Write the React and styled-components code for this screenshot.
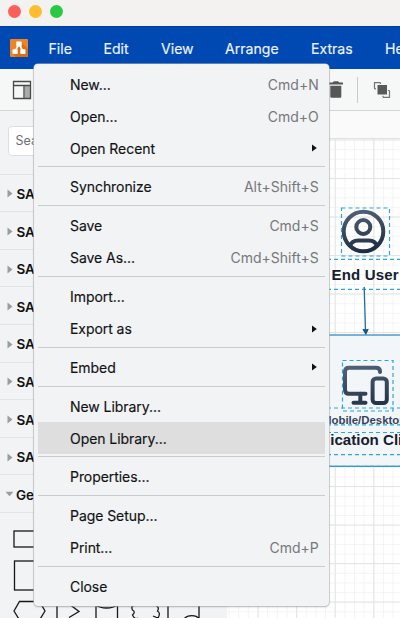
import React from "react";
import styled, { createGlobalStyle } from "styled-components";

const Global = createGlobalStyle`
  * { box-sizing: border-box; }
  body { margin: 0; background: #f3f2f1; font-family: Inter, "Liberation Sans", sans-serif; overflow: hidden; }
`;

const Window = styled.div`
  position: relative;
  width: 400px;
  height: 618px;
  overflow: hidden;
  display: flex;
  flex-direction: column;
  background: #f1f3f5;
`;
const TitleBar = styled.div`
  height: 26px;
  flex: none;
  display: flex;
  gap: 8.3px;
  padding: 4.5px 0 0 7.6px;
  background: #f3f2f0;
`;
const Light = styled.span`
  width: 13px;
  height: 13px;
  border-radius: 50%;
  background: ${(p) => p.$color};
`;
const MenuBar = styled.div`
  height: 43px;
  flex: none;
  display: flex;
  align-items: center;
  padding-left: 9.5px;
  background: #0049b2;
  border-top: 1px solid #003c98;
  color: #eef4ff;
`;
const Logo = styled.svg`
  flex: none;
  width: 18px;
  height: 18px;
  margin-right: 21px;
`;
const MenuTitle = styled.span`
  flex: none;
  width: ${(p) => p.$width}px;
  font-size: 14.1px;
  line-height: 20px;
  padding-top: 1px;
  -webkit-text-stroke: 0.15px currentColor;
  white-space: nowrap;
`;
const Toolbar = styled.div`
  height: 42px;
  flex: none;
  display: flex;
  align-items: center;
  background: #f6f7f7;
  border-bottom: 1px solid #d5d6d8;
  padding-left: 12px;
`;
const PanelIcon = styled.svg`
  flex: none;
  width: 20px;
  height: 20px;
  margin-right: 295px;
`;
const TrashIcon = styled.svg`
  flex: none;
  width: 18px;
  height: 20px;
`;
const Divider = styled.span`
  flex: none;
  width: 1px;
  height: 26px;
  margin: 0 15px 0 12px;
  background: #cacbcc;
`;
const LayersIcon = styled.svg`
  flex: none;
  width: 18px;
  height: 18px;
`;
const Body = styled.div`
  flex: 1;
  display: flex;
  min-height: 0;
`;
const Sidebar = styled.aside`
  flex: none;
  width: 227px;
  overflow: hidden;
  background: #f1f3f5;
`;
const SearchWrap = styled.div`
  height: 63.7px;
  padding: 15px 8px 0;
  border-bottom: 1px solid #e2e4e6;
`;
const Search = styled.div`
  height: 30px;
  padding-left: 6.5px;
  border: 1px solid #dcdee1;
  border-radius: 4px;
  background: #fff;
  color: #6e6f71;
  font-size: 12.5px;
  line-height: 28px;
`;
const Section = styled.div`
  height: 37.6px;
  display: flex;
  align-items: center;
  border-bottom: 1px solid #e2e4e6;
  padding-left: ${(p) => (p.$open ? 5 : 7)}px;
  gap: ${(p) => (p.$open ? 2 : 3.4)}px;
  padding-top: 2px;
  color: #111;
  font-size: 13.5px;
  font-weight: 600;
`;
const SectionArrow = styled.svg`
  flex: none;
  width: ${(p) => (p.$open ? 9 : 6)}px;
  height: 9px;
`;
const Shapes = styled.svg`
  display: block;
  width: 227px;
  height: 105px;
`;
const Main = styled.main`
  flex: 1;
  min-width: 0;
  display: flex;
  flex-direction: column;
`;
const Ruler = styled.div`
  height: 28px;
  flex: none;
  background: #fafafb;
  border-bottom: 1px solid #dfe0e1;
`;
const Diagram = styled.svg`
  display: block;
  width: 173px;
  height: 479px;
  background: #fff;
  font-family: "Liberation Sans", Arial, sans-serif;
  font-weight: 700;
`;
const Menu = styled.div`
  position: absolute;
  left: 34px;
  top: 64px;
  width: 295.2px;
  height: 542px;
  padding: 4.2px 4px;
  border-radius: 4px;
  background: #f1f3f5;
  box-shadow: 0 0 0 0.6px #b4b7bb, 0 1px 2px rgba(0, 0, 0, 0.25);
`;
const Item = styled.div`
  height: 32px;
  display: flex;
  align-items: center;
  justify-content: space-between;
  padding: 0 ${(p) => (p.$sub ? 8.500 : 6.5)}px 0 32px;
  background: ${(p) => (p.$active ? "#dedede" : "transparent")};
  color: #111214;
  font-size: 14px;
  white-space: nowrap;
`;
const Label = styled.span`
  letter-spacing: -0.06px;
  -webkit-text-stroke: 0.15px currentColor;
`;
const Shortcut = styled.span`
  color: #77787a;
`;
const SubArrow = styled.svg`
  width: 5px;
  height: 8px;
`;
const Separator = styled.div`
  height: 6.8px;
  padding-top: 2.2px;
  &::after {
    content: "";
    display: block;
    height: 1px;
    background: #cacbce;
  }
`;

const titles = [["File", 55], ["Edit", 57.5], ["View", 64], ["Arrange", 86], ["Extras", 74], ["Help", 50]];

const groups = [
  [["New...", "Cmd+N"], ["Open...", "Cmd+O"], ["Open Recent", null, true]],
  [["Synchronize", "Alt+Shift+S"]],
  [["Save", "Cmd+S"], ["Save As...", "Cmd+Shift+S"]],
  [["Import..."], ["Export as", null, true]],
  [["Embed", null, true]],
  [["New Library..."], ["Open Library...", null, false, true]],
  [["Properties..."]],
  [["Page Setup..."], ["Print...", "Cmd+P"]],
  [["Close"]],
];

function FileMenu() {
  return (
    <Menu>
      {groups.map((items, i) => (
        <React.Fragment key={i}>
          {i > 0 && <Separator />}
          {items.map(([name, keys, sub, active]) => (
            <Item key={name} $sub={sub} $active={active}>
              <Label>{name}</Label>
              {keys && <Shortcut>{keys}</Shortcut>}
              {sub && <SubArrow viewBox="0 0 5 8"><path d="M0 0.4L4.8 4L0 7.6Z" fill="#111" /></SubArrow>}
            </Item>
          ))}
        </React.Fragment>
      ))}
    </Menu>
  );
}

function Canvas() {
  const dash = { fill: "none", stroke: "#2aa6dc", strokeWidth: 1.2, strokeDasharray: "4 3" };
  return (
    <Diagram viewBox="227 139 173 479">
      <defs>
        <pattern id="minor" x="257.5" y="139.5" width="9.65" height="9.63" patternUnits="userSpaceOnUse">
          <path d="M.5 0V10M0 .5H10" stroke="#f0f0f1" strokeWidth="0.8" />
        </pattern>
        <pattern id="major" x="257.5" y="139.5" width="38.6" height="38.5" patternUnits="userSpaceOnUse">
          <path d="M.6 0V39M0 .6H39" stroke="#dfe0e1" strokeWidth="0.9" />
        </pattern>
        <linearGradient id="ink" gradientUnits="userSpaceOnUse" x1="360" y1="210" x2="368" y2="253">
          <stop stopColor="#506176" /><stop offset="1" stopColor="#1b2b40" />
        </linearGradient>
        <linearGradient id="ink2" gradientUnits="userSpaceOnUse" x1="360" y1="365" x2="368" y2="406">
          <stop stopColor="#506176" /><stop offset="1" stopColor="#233449" />
        </linearGradient>
      </defs>
      <rect x="227" y="139" width="173" height="479" fill="url(#minor)" />
      <rect x="227" y="139" width="173" height="479" fill="url(#major)" />

      <g fill="none" stroke="url(#ink)" strokeWidth="4">
        <circle cx="363.5" cy="231.5" r="19.8" />
        <circle cx="363.3" cy="227" r="7" />
        <path d="M350 246C351.5 241.5 355 240.5 358 240.5H369C372 240.5 375.5 241.5 377 246" />
      </g>
      <rect x="341.5" y="208" width="48" height="48" {...dash} />
      <path d="M327 259.3H400M327 289.3H400" {...dash} />
      <text x="331.5" y="279.5" fontSize="15" textLength="67" fill="#15202f">End User</text>

      <rect x="300" y="335" width="110" height="131.3" fill="#f3f6f9" fillOpacity="0.97" stroke="#2784bc" strokeWidth="1.2" />
      <path d="M300 466.3H400" stroke="#2aa6dc" strokeWidth="1" strokeDasharray="4 3" />
      <path d="M364.2 287L365.5 331" stroke="#226ca5" strokeWidth="1.3" />
      <path d="M363 329.3L365.7 330L368.2 329.3L365.8 334.3Z" fill="#145585" stroke="#145585" />

      <g fill="none" stroke="url(#ink2)" strokeWidth="4" strokeLinecap="round" strokeLinejoin="round">
        <path d="M380 372V371.5Q380 367.7 376 367.7H349Q345 367.7 345 371.5V389.7Q345 393.7 349 393.7H365.5" />
        <path d="M360.3 393.7V402.8M353.5 402.8H365.5" />
        <rect x="372.6" y="378.5" width="14.2" height="24.5" rx="3.5" />
      </g>
      <rect x="342.5" y="360.5" width="50.5" height="50.5" {...dash} />
      <path d="M327 408H400M327 424.8H400M327 432.5H400M327 454.6H400" {...dash} />
      <text x="322" y="424.3" fontSize="11.4" fill="#33435a">Mobile/Desktop</text>
      <text x="330.2" y="445.2" fontSize="15.1" fill="#15202f">ication Client</text>
    </Diagram>
  );
}

export default function App() {
  return (
    <>
      <Global />
      <Window>
        <TitleBar>
          <Light $color="#fc5f59" />
          <Light $color="#fdbd2e" />
          <Light $color="#27ca42" />
        </TitleBar>
        <MenuBar>
          <Logo viewBox="0 0 18 18">
            <rect width="18" height="18" rx="1" fill="#ee8428" />
            <path d="M11 3L18 10V17Q18 18 17 18H6L3 15Z" fill="#df6d14" />
            <path d="M9 5L5 12.5M9 5L13 12.5" stroke="#fff" strokeWidth="1.6" />
            <rect x="6.3" y="2.6" width="5.4" height="5" rx="0.7" fill="#fff" />
            <rect x="2.5" y="10.3" width="5.2" height="4.7" rx="0.7" fill="#fff" />
            <rect x="10.3" y="10.3" width="5.2" height="4.7" rx="0.7" fill="#fff" />
          </Logo>
          {titles.map(([name, width]) => <MenuTitle key={name} $width={width}>{name}</MenuTitle>)}
        </MenuBar>
        <Toolbar>
          <PanelIcon viewBox="0 0 20 20">
            <rect x="12.5" y="6" width="6" height="12.5" fill="#aaa" />
            <path d="M1.5 1.5H18.5V18.5H1.5ZM1.5 5.5H18.5M12 5.5V18.5" fill="none" stroke="#48494a" strokeWidth="1.3" />
          </PanelIcon>
          <TrashIcon viewBox="0 0 18 20">
            <path d="M2 2.6H5.5L7 1.2H11L12.5 2.6H16V4.6H2ZM3.3 5.7H14.3V16.8Q14.3 17.8 13.3 17.8H4.5Q3.3 17.8 3.3 16.8Z" fill="#555657" />
          </TrashIcon>
          <Divider />
          <LayersIcon viewBox="0 0 18 18">
            <rect x="4.5" y="4" width="9.5" height="9.5" fill="#58595a" />
            <path d="M7.5 1.7H1.5V8M1.5 7.8H3M7.5 1.7V3M16.5 9.5V16.3H10M14.8 9.5H16.5M10 16.3V14.8" fill="none" stroke="#747576" strokeWidth="1.2" />
          </LayersIcon>
        </Toolbar>
        <Body>
          <Sidebar>
            <SearchWrap><Search>Search</Search></SearchWrap>
            {Array.from({ length: 8 }, (_, i) => (
              <Section key={i}>
                <SectionArrow viewBox="0 0 6 9"><path d="M.5 .5L5.5 4.5L.5 8.5Z" fill="#9b9c9e" /></SectionArrow>
                SAP
              </Section>
            ))}
            <Section $open>
              <SectionArrow $open viewBox="0 0 9 9"><path d="M.5 1.8H8.5L4.5 6.2Z" fill="#9b9c9e" /></SectionArrow>
              General
            </Section>
            <Shapes viewBox="0 513 227 105" fill="none" stroke="#17181a" strokeWidth="1.3">
              <rect x="14" y="531" width="31" height="16" />
              <rect x="14.5" y="561" width="29" height="29" />
              <path d="M14 611L19.5 601.5H39.5L45 611L39.5 620H19.5ZM57 600V620M69 604L79 611.5L69 617.5" />
              <path d="M96 620V604M117.5 620V604M96 605C101 609 112 609 117.5 605" />
              <path d="M137 605Q130 605 132.5 610Q136 612 132.5 615Q135 620 138 618M155 605Q160 607 157.5 611Q161 613 158 618L153 616" />
              <path d="M168 600V620M199 600V620M184 619C187 614.5 197 614.5 199 619" />
            </Shapes>
          </Sidebar>
          <Main>
            <Ruler />
            <Canvas />
          </Main>
        </Body>
        <FileMenu />
      </Window>
    </>
  );
}
